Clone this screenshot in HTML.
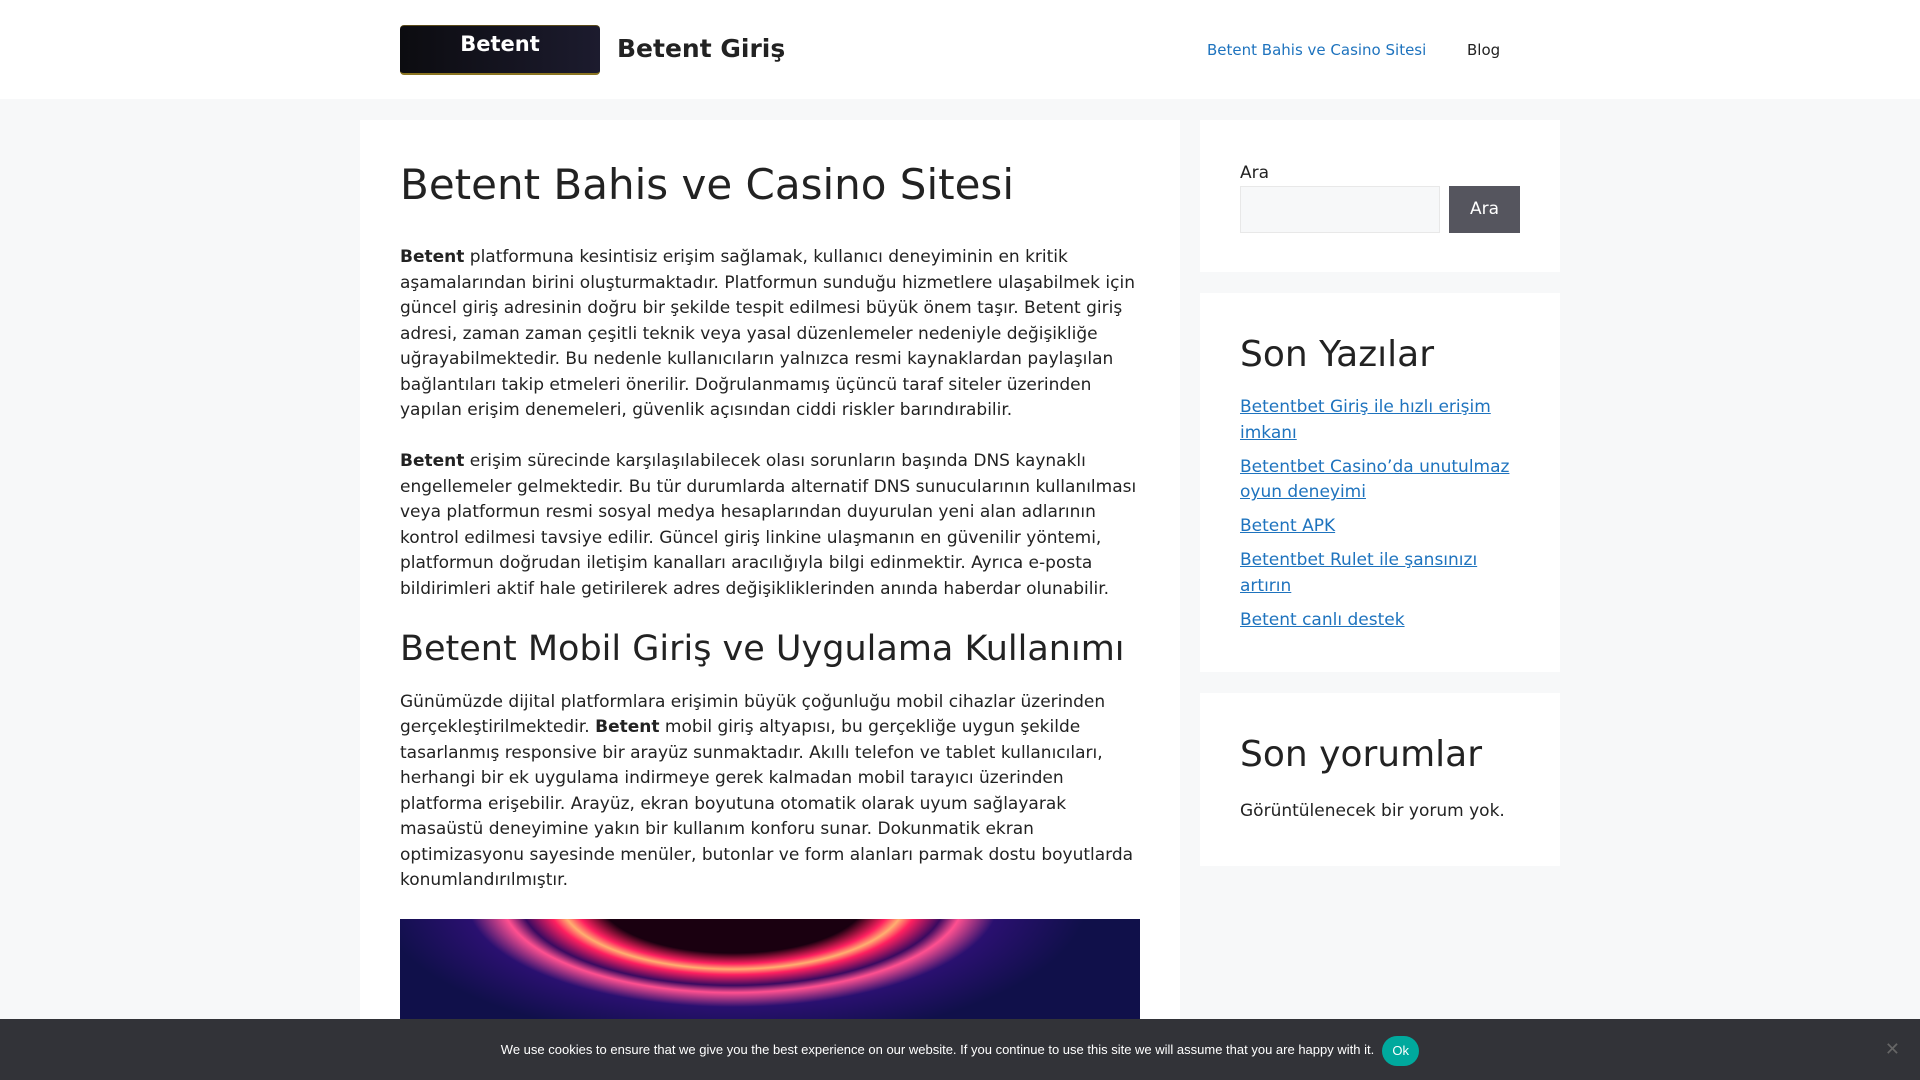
<!DOCTYPE html>
<html style="overflow:hidden;height:1080px"><head><meta charset="utf-8">
<style>
*{box-sizing:border-box;margin:0;padding:0}
body{width:1920px;height:1080px;overflow:hidden;position:relative;background:#f7f8f9;font-family:"DejaVu Sans","Liberation Sans",sans-serif;color:#222;font-size:17px;line-height:1.5}
a{color:#1e73be}
.header{position:absolute;left:0;top:0;width:1920px;height:99px;background:#fff}
.logo{position:absolute;left:400px;top:25px;width:200px;height:50px;border-radius:4px;background:linear-gradient(90deg,#0c0c10,#1c1b2e);border-bottom:2px solid #8a7420;border-top:1px solid #5a4a18;color:#fff;font-weight:bold;font-size:21px;text-align:center;line-height:36px}
.title{position:absolute;left:617px;top:33px;font-size:25px;font-weight:bold;color:#222;line-height:32px}
.nav{position:absolute;top:40px;font-size:15px;line-height:20px}
.content{position:absolute;left:360px;top:120px;width:820px;height:960px;overflow:hidden;background:#fff;padding:40px}
h1{font-size:42px;font-weight:normal;line-height:1.2;margin-bottom:35px}
h2{font-size:35px;font-weight:normal;line-height:1.2;margin-bottom:20px}
p{margin-bottom:25.5px}
.img{width:740px;height:200px;margin-top:2px;background:radial-gradient(ellipse 60% 90% at 45% -10%,#1a0010 30%,#ff2060 36%,#ffb070 39%,#ff2060 42%,#3a0a60 48%,#ff5090 52%,#2a1070 60%,#10104a 80%);}
.w{position:absolute;left:1200px;width:360px;background:#fff;padding:40px}
.w h2{font-size:36px;margin-bottom:19px}
.w ul{list-style:none}
.w li{margin-bottom:8.5px}
.cookie{position:absolute;left:0;top:1019px;width:1920px;height:61px;background:#323338;color:#fff;font-family:"Liberation Sans",Arial,sans-serif;font-size:13px;text-align:center;line-height:61px}
.ok{display:inline-block;background:#00a99d;color:#fff;border-radius:15px;width:37px;height:30px;line-height:30px;margin-left:8px;vertical-align:middle;font-size:13px}
</style></head><body>
<div class="header">
<div class="logo">Betent</div>
<div class="title">Betent Giriş</div>
<div class="nav" style="left:1207px;color:#1e73be">Betent Bahis ve Casino Sitesi</div>
<div class="nav" style="left:1467px;color:#222">Blog</div>
</div>
<div class="content">
<h1>Betent Bahis ve Casino Sitesi</h1>
<p><b>Betent</b> platformuna kesintisiz erişim sağlamak, kullanıcı deneyiminin en kritik aşamalarından birini oluşturmaktadır. Platformun sunduğu hizmetlere ulaşabilmek için güncel giriş adresinin doğru bir şekilde tespit edilmesi büyük önem taşır. Betent giriş adresi, zaman zaman çeşitli teknik veya yasal düzenlemeler nedeniyle değişikliğe uğrayabilmektedir. Bu nedenle kullanıcıların yalnızca resmi kaynaklardan paylaşılan bağlantıları takip etmeleri önerilir. Doğrulanmamış üçüncü taraf siteler üzerinden yapılan erişim denemeleri, güvenlik açısından ciddi riskler barındırabilir.</p>
<p><b>Betent</b> erişim sürecinde karşılaşılabilecek olası sorunların başında DNS kaynaklı engellemeler gelmektedir. Bu tür durumlarda alternatif DNS sunucularının kullanılması veya platformun resmi sosyal medya hesaplarından duyurulan yeni alan adlarının kontrol edilmesi tavsiye edilir. Güncel giriş linkine ulaşmanın en güvenilir yöntemi, platformun doğrudan iletişim kanalları aracılığıyla bilgi edinmektir. Ayrıca e-posta bildirimleri aktif hale getirilerek adres değişikliklerinden anında haberdar olunabilir.</p>
<h2>Betent Mobil Giriş ve Uygulama Kullanımı</h2>
<p>Günümüzde dijital platformlara erişimin büyük çoğunluğu mobil cihazlar üzerinden gerçekleştirilmektedir. <b>Betent</b> mobil giriş altyapısı, bu gerçekliğe uygun şekilde tasarlanmış responsive bir arayüz sunmaktadır. Akıllı telefon ve tablet kullanıcıları, herhangi bir ek uygulama indirmeye gerek kalmadan mobil tarayıcı üzerinden platforma erişebilir. Arayüz, ekran boyutuna otomatik olarak uyum sağlayarak masaüstü deneyimine yakın bir kullanım konforu sunar. Dokunmatik ekran optimizasyonu sayesinde menüler, butonlar ve form alanları parmak dostu boyutlarda konumlandırılmıştır.</p>
<div class="img"></div>
</div>
<div class="w" style="top:120px;height:152px">
<div style="line-height:24px;margin-top:1px">Ara</div>
<div style="position:absolute;left:40px;top:66px;width:200px;height:47px;background:#f7f8f9;border:1px solid #e8e8e8"></div>
<div style="position:absolute;left:249px;top:66px;width:71px;height:47px;background:#55555e;color:#fff;text-align:center;line-height:47px">Ara</div>
</div>
<div class="w" style="top:293px;height:379px">
<h2>Son Yazılar</h2>
<ul>
<li><a href="#">Betentbet Giriş ile hızlı erişim imkanı</a></li>
<li><a href="#">Betentbet Casino’da unutulmaz oyun deneyimi</a></li>
<li><a href="#">Betent APK</a></li>
<li><a href="#">Betentbet Rulet ile şansınızı artırın</a></li>
<li><a href="#">Betent canlı destek</a></li>
</ul>
</div>
<div class="w" style="top:693px;height:173px">
<h2 style="margin-bottom:23px">Son yorumlar</h2>
<div>Görüntülenecek bir yorum yok.</div>
</div>
<div class="cookie">We use cookies to ensure that we give you the best experience on our website. If you continue to use this site we will assume that you are happy with it.<span class="ok">Ok</span>
<span style="position:absolute;right:20px;top:0;color:#666;font-size:18px">✕</span></div>
</body></html>
